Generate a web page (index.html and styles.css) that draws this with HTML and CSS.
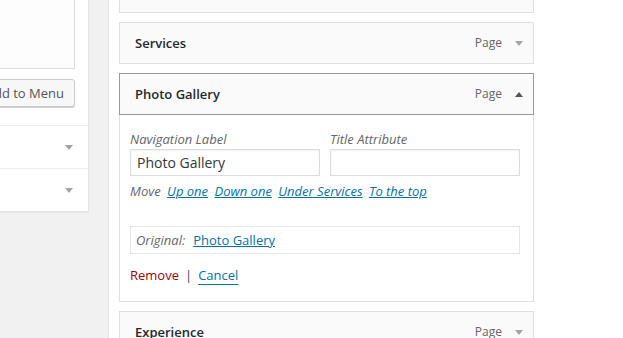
FILE: index.html
```html
<!DOCTYPE html>
<html lang="en">
<head>
  <meta charset="UTF-8">
  <title>Menus</title>
  <link rel="stylesheet" href="styles.css">
</head>
<body>
  <div class="page">
    <aside class="side">
      <div class="side-panel">
        <div class="side-top">
          <div class="checklist"></div>
          <div class="side-actions">
            <button class="btn">Add to Menu</button>
          </div>
        </div>
        <div class="side-row">
          <svg class="arrow" width="8" height="5" viewBox="0 0 8 5"><path d="M0 0h8L4 5z"/></svg>
        </div>
        <div class="side-row">
          <svg class="arrow" width="8" height="5" viewBox="0 0 8 5"><path d="M0 0h8L4 5z"/></svg>
        </div>
      </div>
    </aside>

    <main class="menu-edit">
      <ul class="menu">
        <li class="item">
          <div class="handle handle-empty"></div>
        </li>
        <li class="item">
          <div class="handle">
            <span class="title">Services</span>
            <span class="controls">
              <span class="type">Page</span>
              <svg class="arrow" width="8" height="5" viewBox="0 0 8 5"><path d="M0 0h8L4 5z"/></svg>
            </span>
          </div>
        </li>
        <li class="item active">
          <div class="handle">
            <span class="title">Photo Gallery</span>
            <span class="controls">
              <span class="type">Page</span>
              <svg class="arrow up" width="8" height="5" viewBox="0 0 8 5"><path d="M0 5h8L4 0z"/></svg>
            </span>
          </div>
          <div class="settings">
            <div class="fields">
              <label class="field">
                <span class="label">Navigation Label</span>
                <input type="text" value="Photo Gallery">
              </label>
              <label class="field">
                <span class="label">Title Attribute</span>
                <input type="text" value="">
              </label>
            </div>
            <p class="move">
              <span class="move-label">Move</span>
              <a href="#">Up one</a>
              <a href="#">Down one</a>
              <a href="#">Under Services</a>
              <a href="#">To the top</a>
            </p>
            <div class="original">
              <span class="original-label">Original:</span>
              <a href="#">Photo Gallery</a>
            </div>
            <div class="actions">
              <a href="#" class="remove">Remove</a>
              <span class="sep">|</span>
              <a href="#" class="cancel">Cancel</a>
            </div>
          </div>
        </li>
        <li class="item">
          <div class="handle">
            <span class="title">Experience</span>
            <span class="controls">
              <span class="type">Page</span>
              <svg class="arrow" width="8" height="5" viewBox="0 0 8 5"><path d="M0 0h8L4 5z"/></svg>
            </span>
          </div>
        </li>
      </ul>
    </main>
  </div>
</body>
</html>
```

FILE: styles.css
```css
body {
  margin: 0;
  padding: 0;
  font-family: 'Open Sans', 'Noto Sans', sans-serif;
  font-size: 13px;
  color: #444;
  background: #f1f1f1;
  overflow: hidden;
}

.page {
  display: flex;
  align-items: flex-start;
  height: 338px;
}

/* Left column: add items box */
.side {
  width: 300px;
  margin-left: -211px;
  flex-shrink: 0;
}

.side-panel {
  margin-top: -50px;
  background: #fff;
  border: 1px solid #e5e5e5;
  box-shadow: 0 1px 1px rgba(0, 0, 0, 0.04);
}

.side-top {
  padding: 0 13px 0 10px;
}

.checklist {
  height: 118px;
  box-sizing: border-box;
  border: 1px solid #ddd;
  background: #fdfdfd;
}

.side-actions {
  display: flex;
  justify-content: flex-end;
  padding: 10px 0 18px;
}

.btn {
  height: 28px;
  padding: 0 10px;
  font-family: inherit;
  font-size: 13px;
  color: #555;
  background: #f7f7f7;
  border: 1px solid #ccc;
  border-radius: 3px;
  box-shadow: 0 1px 0 #ccc;
}

.side-row {
  height: 42px;
  border-top: 1px solid #eee;
  display: flex;
  align-items: center;
  justify-content: flex-end;
  padding-right: 15px;
}

.arrow {
  display: block;
  fill: #a0a5aa;
}

.arrow.up {
  fill: #555;
}

/* Right column: menu structure */
.menu-edit {
  flex: 1;
  margin-left: 19px;
  height: 338px;
  background: #fff;
  border-left: 1px solid #e5e5e5;
  padding-left: 10px;
}

.menu {
  list-style: none;
  margin: -29px 0 0;
  padding: 0;
  width: 415px;
}

.item {
  margin-bottom: 9px;
}

.handle {
  display: flex;
  justify-content: space-between;
  align-items: center;
  padding: 10px 10px 10px 15px;
  line-height: 20px;
  border: 1px solid #dfdfdf;
  background: #fafafa;
}

.handle-empty {
  height: 20px;
}

.title {
  font-weight: 600;
  color: #23282d;
}

.controls {
  display: flex;
  align-items: center;
  gap: 13px;
}

.type {
  font-size: 12px;
  color: #666;
}

.active .handle {
  border-color: #999;
}

.settings {
  border: 1px solid #dfdfdf;
  border-top: none;
  background: #fff;
  padding: 15px 10px 16px;
}

.fields {
  display: flex;
  gap: 10px;
}

.field {
  display: flex;
  flex-direction: column;
  gap: 1px;
}

.label {
  font-style: italic;
  color: #666;
  line-height: 18px;
}

.field input {
  width: 190px;
  height: 27px;
  box-sizing: border-box;
  padding: 2px 6px;
  font-family: inherit;
  font-size: 14px;
  color: #32373c;
  border: 1px solid #ddd;
  box-shadow: inset 0 1px 2px rgba(0, 0, 0, 0.07);
  outline: none;
}

.move {
  margin: 5px 0 0;
  line-height: 20px;
  font-style: italic;
  color: #666;
}

.move a {
  color: #0073aa;
  margin-left: 3px;
}

.original {
  margin-top: 25px;
  width: 390px;
  height: 28px;
  box-sizing: border-box;
  border: 1px solid #e5e5e5;
  padding: 0 5px;
  display: flex;
  align-items: center;
  gap: 8px;
}

.original-label {
  font-style: italic;
  color: #666;
}

.original a {
  color: #0073aa;
}

.actions {
  margin-top: 11px;
  line-height: 20px;
  display: flex;
  gap: 6px;
}

.remove {
  color: #a00;
  text-decoration: none;
}

.sep {
  color: #444;
}

.cancel {
  color: #0073aa;
  text-underline-offset: 4px;
}
```
